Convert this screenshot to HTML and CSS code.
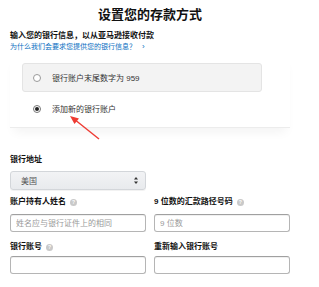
FILE: index.html
```html
<!DOCTYPE html>
<html lang="zh-CN">
<head>
  <meta charset="UTF-8" />
  <title>设置您的存款方式</title>
  <link rel="stylesheet" href="styles.css">
</head>
<body>
  <div class="page">
    <h1 class="title">设置您的存款方式</h1>
    <p class="intro">输入您的银行信息，以从亚马逊接收付款</p>
    <a class="why-link" href="#">为什么我们会要求您提供您的银行信息？<span class="chev">›</span></a>

    <div class="account-card">
      <label class="option option-existing">
        <span class="radio"></span>
        <span>银行账户末尾数字为 959</span>
      </label>
      <label class="option">
        <span class="radio checked"></span>
        <span>添加新的银行账户</span>
      </label>

      <!-- annotation arrow drawn over the screenshot -->
      <svg class="pointer" width="34" height="26" viewBox="0 0 34 26">
        <line x1="31" y1="24" x2="6" y2="4" stroke="#ee3b33" stroke-width="1.4" />
        <polygon points="2,1 11,3.5 6.5,9" fill="#ee3b33" />
      </svg>
    </div>

    <div class="field">
      <div class="label">银行地址</div>
      <div class="select">
        <span>美国</span>
        <svg width="4" height="7" viewBox="0 0 4 7">
          <polygon points="2,0 4,2.6 0,2.6" fill="#333" />
          <polygon points="0,4.4 4,4.4 2,7" fill="#333" />
        </svg>
      </div>
    </div>

    <div class="grid">
      <div class="field">
        <div class="label">账户持有人姓名 <span class="help">?</span></div>
        <input class="text-input" type="text" placeholder="姓名应与银行证件上的相同">
      </div>
      <div class="field">
        <div class="label">9 位数的汇款路径号码 <span class="help">?</span></div>
        <input class="text-input" type="text" placeholder="9 位数">
      </div>
      <div class="field row-two">
        <div class="label">银行账号 <span class="help">?</span></div>
        <input class="text-input" type="text">
      </div>
      <div class="field row-two">
        <div class="label">重新输入银行账号</div>
        <input class="text-input" type="text">
      </div>
    </div>
  </div>
</body>
</html>
```

FILE: styles.css
```css
* {
  margin: 0;
  padding: 0;
  box-sizing: border-box;
}
body {
  background: #fff;
  font-family: Arial, "Noto Sans CJK SC", sans-serif;
  color: #111;
  font-size: 8px;
}
.page {
  width: 280px;
  margin-left: 10px;
}
.title {
  margin-top: 7px;
  font-size: 13px;
  line-height: 16px;
  text-align: center;
  font-weight: bold;
}
.intro {
  margin-top: 8px;
  font-weight: bold;
  line-height: 10px;
}
.why-link {
  display: block;
  margin-top: 1px;
  line-height: 10px;
  font-size: 7px;
  color: #0a6fc2;
  text-decoration: none;
}
.why-link .chev {
  margin-left: 6px;
  font-size: 8px;
}
.account-card {
  position: relative;
  margin-top: 3px;
  padding: 8px 0 4px;
  border-bottom: 1px solid #ececec;
  box-shadow: 0 8px 10px -4px rgba(0, 0, 0, 0.05);
}
.option {
  display: flex;
  align-items: center;
  gap: 11px;
  width: 240px;
  height: 29px;
  margin-left: 12px;
  padding-left: 11px;
  color: #333;
}
.option-existing {
  background: #f3f3f3;
  border: 1px solid #e4e4e4;
  border-radius: 3px;
  padding-left: 10px;
  margin-bottom: 2px;
}
.radio {
  width: 8px;
  height: 8px;
  border-radius: 50%;
  border: 1px solid #9a9a9a;
  background: #fff;
  display: flex;
  align-items: center;
  justify-content: center;
}
.radio.checked {
  border-color: #777;
}
.radio.checked::after {
  content: "";
  width: 4px;
  height: 4px;
  border-radius: 50%;
  background: #222;
}
.pointer {
  position: absolute;
  left: 58px;
  top: 60px;
}
.field .label {
  font-weight: bold;
  line-height: 10px;
  display: flex;
  align-items: center;
  gap: 4px;
}
.account-card + .field {
  margin-top: 27px;
}
.select {
  margin-top: 6px;
  width: 136px;
  height: 19px;
  display: flex;
  align-items: center;
  justify-content: space-between;
  padding: 0 7px 0 10px;
  background: linear-gradient(#f2f3f5, #e8eaed);
  border: 1px solid #d3d6da;
  border-radius: 3px;
  box-shadow: 0 1px 0 rgba(0, 0, 0, 0.05);
  color: #555;
}
.grid {
  display: grid;
  grid-template-columns: 136px 136px;
  column-gap: 8px;
  margin-top: 7px;
}
.help {
  display: inline-flex;
  align-items: center;
  justify-content: center;
  width: 7px;
  height: 7px;
  border-radius: 50%;
  background: #c9c9c9;
  color: #fff;
  font-size: 5px;
  font-weight: bold;
}
.text-input {
  display: block;
  margin-top: 7px;
  width: 136px;
  height: 18px;
  padding: 0 5px;
  border: 1px solid #b5b5b5;
  border-top-color: #a0a0a0;
  border-radius: 3px;
  box-shadow: inset 0 1px 0 rgba(0, 0, 0, 0.06);
  font-family: Arial, "Noto Sans CJK SC", sans-serif;
  font-size: 8px;
  color: #333;
  outline: none;
}
.text-input::placeholder {
  color: #9a9a9a;
}
.row-two {
  margin-top: 10px;
}
.row-two .text-input {
  margin-top: 4px;
}
```
